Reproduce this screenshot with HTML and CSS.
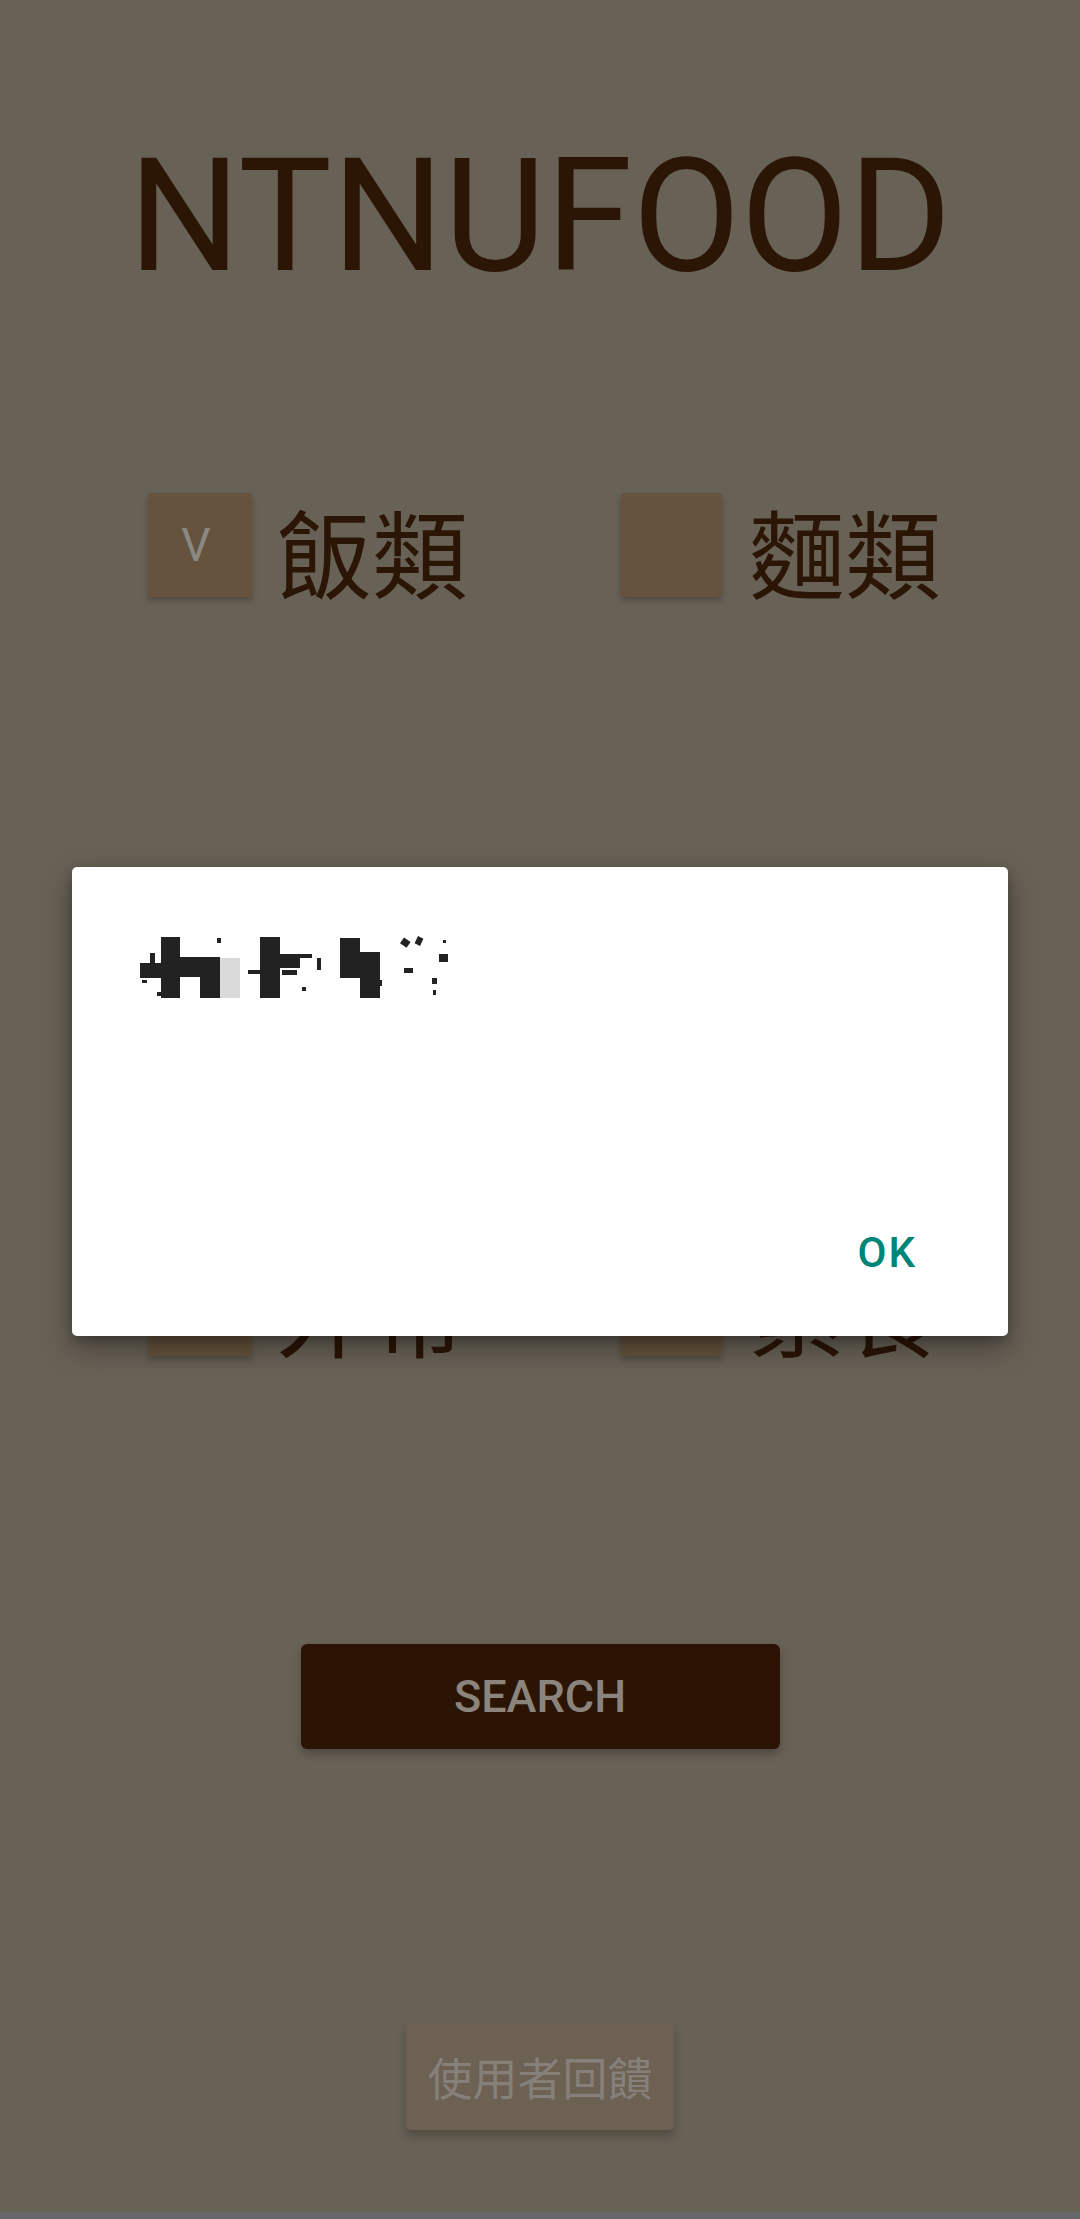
FILE: index.html
```html
<!DOCTYPE html>
<html lang="zh-Hant">
<head>
<meta charset="utf-8">
<title>NTNUFOOD</title>
<link rel="stylesheet" href="styles.css">
</head>
<body>
<div class="screen">
  <h1 class="title">NTNUFOOD</h1>

  <div class="options">
    <div class="option">
      <div class="box box-a"><span class="mark">V</span></div>
      <span class="label">飯類</span>
    </div>
    <div class="option">
      <div class="box box-b"></div>
      <span class="label">麵類</span>
    </div>
    <div class="option">
      <div class="box box-a"></div>
      <span class="label">外帶</span>
    </div>
    <div class="option">
      <div class="box box-b"></div>
      <span class="label">素食</span>
    </div>
  </div>

  <button class="search">SEARCH</button>
  <button class="feedback">使用者回饋</button>

  <div class="navstrip"></div>

  <div class="dialog">
    <svg class="censor" width="340" height="100" viewBox="0 0 340 100" aria-hidden="true">
      <g fill="#222">
        <rect x="10" y="43" width="27" height="15"/>
        <rect x="20" y="33" width="5" height="10"/>
        <rect x="31" y="17" width="19" height="61"/>
        <rect x="50" y="37" width="40" height="20"/>
        <rect x="70" y="37" width="20" height="41"/>
        <rect x="87" y="18" width="4" height="5"/>
        <rect x="12" y="60" width="5" height="3"/>
        <rect x="27" y="72" width="10" height="4"/>
        <rect x="85" y="70" width="6" height="3"/>
        <rect x="130" y="17" width="20" height="61"/>
        <rect x="135" y="34" width="47" height="4"/>
        <rect x="135" y="36" width="35" height="12"/>
        <rect x="118" y="50" width="14" height="4"/>
        <rect x="152" y="50" width="15" height="5"/>
        <rect x="187" y="38" width="4" height="12"/>
        <rect x="172" y="67" width="4" height="4"/>
        <rect x="210" y="18" width="20" height="40"/>
        <rect x="230" y="33" width="20" height="45"/>
        <rect x="227" y="32" width="23" height="3"/>
        <rect x="248" y="60" width="4" height="6"/>
        <rect x="271" y="19" width="8" height="7" transform="rotate(35 275 23)"/>
        <rect x="286" y="17" width="6" height="8" transform="rotate(25 289 21)"/>
        <rect x="274" y="48" width="9" height="5"/>
        <rect x="309" y="34" width="9" height="8"/>
        <rect x="313" y="20" width="3" height="3"/>
        <rect x="302" y="58" width="5" height="6"/>
        <rect x="303" y="70" width="3" height="5"/>
      </g>
      <rect x="90" y="38" width="20" height="40" fill="#dadada"/>
    </svg>
    <div class="actions">
      <button class="ok">OK</button>
    </div>
  </div>
</div>
</body>
</html>
```
FILE: styles.css
```css
html, body {
  margin: 0;
  padding: 0;
}
body {
  background: #686156;
  width: 1080px;
  height: 2219px;
  overflow: hidden;
  font-family: Roboto, "Noto Sans CJK TC", sans-serif;
}
.screen {
  position: relative;
  width: 1080px;
  height: 2219px;
  display: flex;
  flex-direction: column;
  align-items: center;
}
.title {
  margin: 136px 0 0 0;
  font-family: Roboto, sans-serif;
  font-weight: 400;
  font-size: 157px;
  line-height: 160px;
  color: #2b1505;
  letter-spacing: 0;
}
.options {
  align-self: stretch;
  margin-top: 197px;
  padding-left: 148px;
  display: grid;
  grid-template-columns: 473px auto;
  row-gap: 655px;
}
.option {
  display: flex;
  align-items: flex-start;
  gap: 24px;
}
.box {
  height: 104px;
  border-radius: 4px;
  background: #65533e;
  box-shadow: 0 4px 6px rgba(0, 0, 0, 0.22);
  display: flex;
  align-items: center;
  justify-content: center;
}
.box-a { width: 104px; }
.box-b { width: 101px; margin-right: 3px; }
.mark {
  font-family: Roboto, sans-serif;
  font-size: 46px;
  line-height: 1;
  color: #8b8884;
  margin-left: -8px;
}
.label {
  margin-top: 23px;
  font-family: "Noto Sans CJK TC", sans-serif;
  font-size: 96px;
  line-height: 68px;
  color: #2b1505;
}
button {
  border: none;
  padding: 0;
  cursor: pointer;
}
.search {
  margin-top: 288px;
  width: 479px;
  height: 105px;
  border-radius: 6px;
  background: #2b1404;
  color: #8a847d;
  font-family: Roboto, sans-serif;
  font-weight: 500;
  font-size: 45px;
  letter-spacing: 0;
  box-shadow: 0 5px 8px rgba(0, 0, 0, 0.25);
}
.feedback {
  margin-top: 274px;
  width: 268px;
  height: 107px;
  border-radius: 5px;
  background: #6c6153;
  color: #86807a;
  font-family: "Noto Sans CJK TC", sans-serif;
  font-size: 45px;
  box-shadow: 0 6px 10px rgba(0, 0, 0, 0.22);
}
.navstrip {
  margin-top: auto;
  align-self: stretch;
  height: 7px;
  background: #67666b;
}
.dialog {
  position: absolute;
  left: 72px;
  top: 867px;
  width: 936px;
  height: 469px;
  box-sizing: border-box;
  background: #ffffff;
  border-radius: 5px;
  box-shadow: 0 12px 30px rgba(0, 0, 0, 0.35), 0 4px 10px rgba(0, 0, 0, 0.2);
  padding: 53px 0 62px 58px;
  display: flex;
  flex-direction: column;
}
.censor {
  display: block;
}
.actions {
  margin-top: auto;
  display: flex;
  justify-content: flex-end;
  padding-right: 91px;
}
.ok {
  background: transparent;
  color: #008577;
  font-family: Roboto, sans-serif;
  font-weight: 500;
  font-size: 42px;
  line-height: 42px;
  letter-spacing: 2px;
}
```
